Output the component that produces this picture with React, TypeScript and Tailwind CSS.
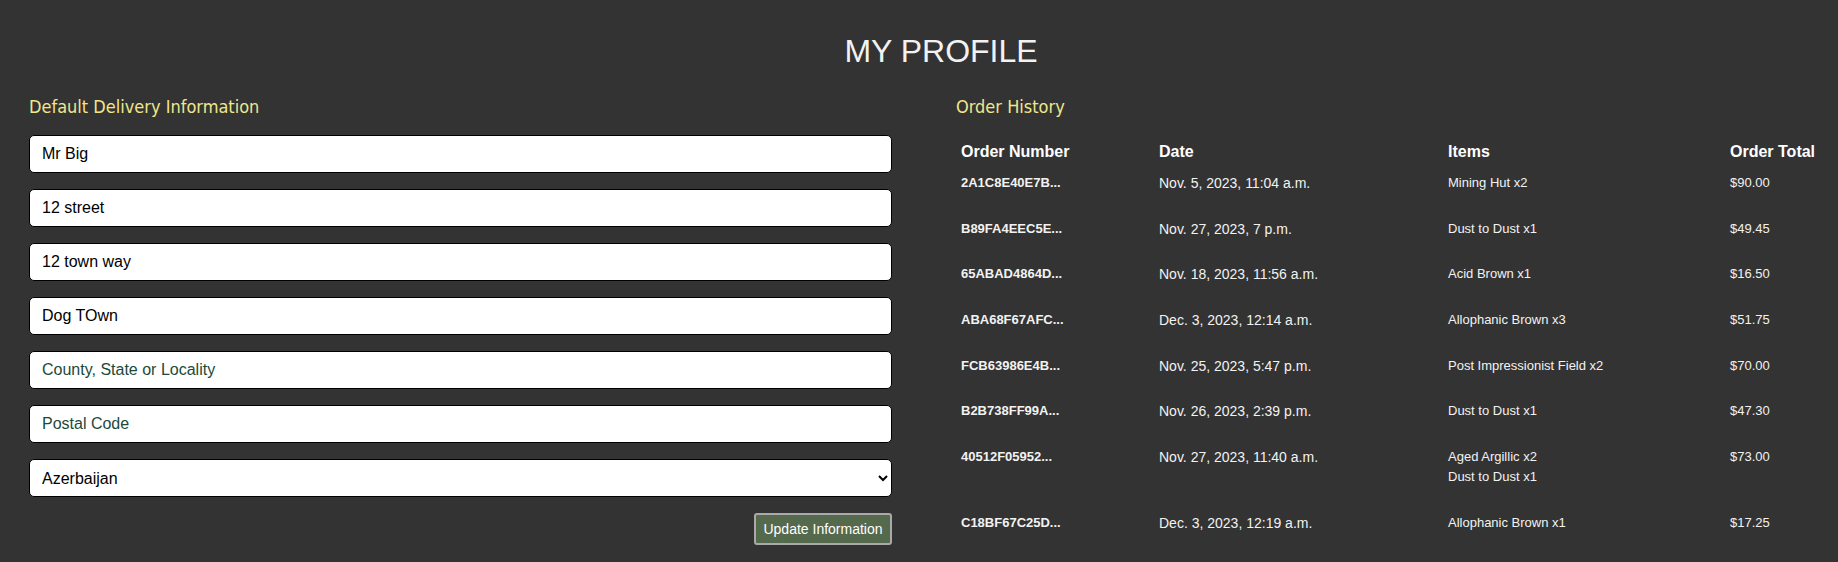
import React from 'react';

interface Order {
  id: string;
  date: string;
  items: string[];
  total: string;
}

const orders: Order[] = [
  { id: '2A1C8E40E7B...', date: 'Nov. 5, 2023, 11:04 a.m.', items: ['Mining Hut x2'], total: '$90.00' },
  { id: 'B89FA4EEC5E...', date: 'Nov. 27, 2023, 7 p.m.', items: ['Dust to Dust x1'], total: '$49.45' },
  { id: '65ABAD4864D...', date: 'Nov. 18, 2023, 11:56 a.m.', items: ['Acid Brown x1'], total: '$16.50' },
  { id: 'ABA68F67AFC...', date: 'Dec. 3, 2023, 12:14 a.m.', items: ['Allophanic Brown x3'], total: '$51.75' },
  { id: 'FCB63986E4B...', date: 'Nov. 25, 2023, 5:47 p.m.', items: ['Post Impressionist Field x2'], total: '$70.00' },
  { id: 'B2B738FF99A...', date: 'Nov. 26, 2023, 2:39 p.m.', items: ['Dust to Dust x1'], total: '$47.30' },
  { id: '40512F05952...', date: 'Nov. 27, 2023, 11:40 a.m.', items: ['Aged Argillic x2', 'Dust to Dust x1'], total: '$73.00' },
  { id: 'C18BF67C25D...', date: 'Dec. 3, 2023, 12:19 a.m.', items: ['Allophanic Brown x1'], total: '$17.25' },
];

const countries = ['Afghanistan', 'Albania', 'Algeria', 'Argentina', 'Australia', 'Austria', 'Azerbaijan'];

const inputCls =
  'w-full h-[38px] rounded-[5px] border border-black bg-white px-[12px] text-[16px] text-black placeholder:text-[#1b4a3a] outline-none';

const SectionHeading: React.FC<{ children: React.ReactNode }> = ({ children }) => (
  <h2 className="font-['DejaVu_Sans_Condensed','DejaVu_Sans',sans-serif] font-stretch-condensed text-[18px] leading-[22px] text-[#f0e68c]">
    {children}
  </h2>
);

const DeliveryForm: React.FC = () => {
  const [form, setForm] = React.useState({
    name: 'Mr Big',
    street1: '12 street',
    street2: '12 town way',
    town: 'Dog TOwn',
    county: '',
    postcode: '',
    country: 'Azerbaijan',
  });

  const set = (key: keyof typeof form) => (e: React.ChangeEvent<HTMLInputElement | HTMLSelectElement>) =>
    setForm({ ...form, [key]: e.target.value });

  return (
    <div className="w-[863px] shrink-0 flex flex-col">
      <SectionHeading>Default Delivery Information</SectionHeading>
      <form className="mt-[17px] flex flex-col gap-[16px]" onSubmit={(e) => e.preventDefault()}>
        <input className={inputCls} value={form.name} onChange={set('name')} />
        <input className={inputCls} value={form.street1} onChange={set('street1')} />
        <input className={inputCls} value={form.street2} onChange={set('street2')} />
        <input className={inputCls} value={form.town} onChange={set('town')} />
        <input className={inputCls} value={form.county} onChange={set('county')} placeholder="County, State or Locality" />
        <input className={inputCls} value={form.postcode} onChange={set('postcode')} placeholder="Postal Code" />
        <select
          className="w-full h-[38px] rounded-[5px] border border-black bg-white pl-[8px] pr-[6px] text-[16px] text-black outline-none"
          value={form.country}
          onChange={set('country')}
        >
          {countries.map((c) => (
            <option key={c}>{c}</option>
          ))}
        </select>
        <div className="flex justify-end">
          <button
            type="submit"
            className="h-[32px] w-[138px] rounded-[3px] border-2 border-[#a9a9a9] bg-[#55694d] text-[14px] text-white"
          >
            Update Information
          </button>
        </div>
      </form>
    </div>
  );
};

const cols = 'grid grid-cols-[198px_289px_282px_1fr] pl-[5px]';

const OrderHistory: React.FC = () => (
  <div className="flex-1 flex flex-col">
    <SectionHeading>Order History</SectionHeading>
    <div className={`${cols} mt-[24px] text-[16px] leading-[20px] font-bold text-white`}>
      <div>Order Number</div>
      <div>Date</div>
      <div>Items</div>
      <div>Order Total</div>
    </div>
    <div className="mt-[11px] flex flex-col">
      {orders.map((o) => (
        <div key={o.id} className={`${cols} pb-[25.7px] leading-[20px] text-[#f2f2f2]`}>
          <div className="text-[13px] font-bold">{o.id}</div>
          <div className="text-[14px]">{o.date}</div>
          <div className="text-[13px]">
            {o.items.map((it) => (
              <div key={it}>{it}</div>
            ))}
          </div>
          <div className="text-[13px]">{o.total}</div>
        </div>
      ))}
    </div>
  </div>
);

export default function App() {
  return (
    <div className="min-h-screen w-full overflow-hidden bg-[#333333] font-['Liberation_Sans',Arial,sans-serif] text-white">
      <h1 className="pt-[33px] pl-[44px] text-center text-[32px] leading-[36px] font-normal text-[#f2f2f2]">MY PROFILE</h1>
      <div className="mt-[27px] flex gap-[64px] pl-[29px]">
        <DeliveryForm />
        <OrderHistory />
      </div>
    </div>
  );
}
